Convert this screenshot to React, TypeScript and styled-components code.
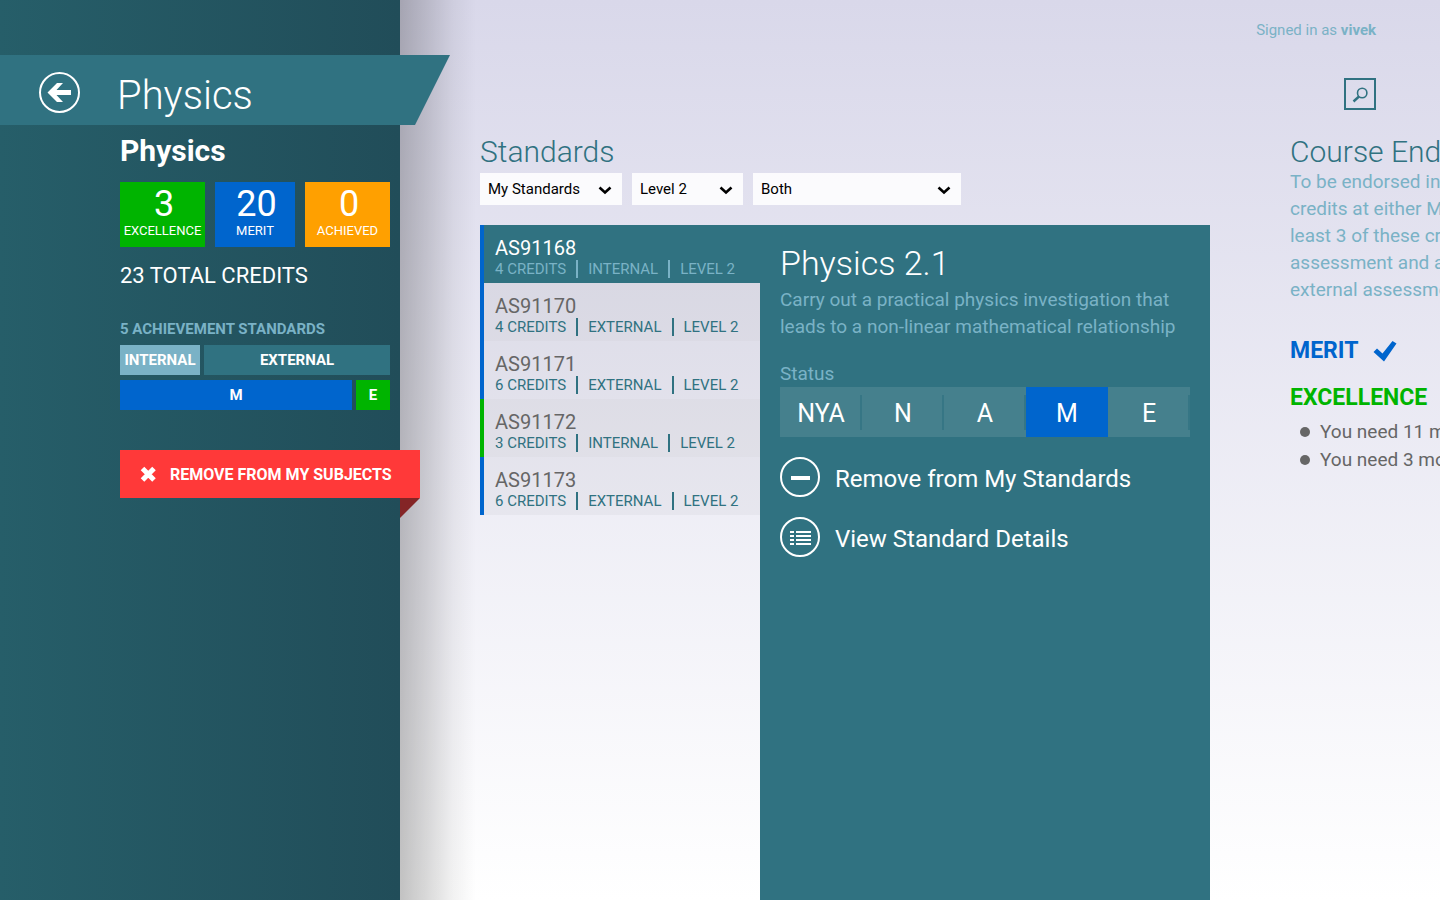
import React, { useState } from "react";
import styled, { createGlobalStyle, css } from "styled-components";

const colors = {
  teal: "#307281",
  pale: "#7ab2c6",
  green: "#00b400",
  blue: "#0065cd",
  orange: "#ffa000",
  red: "#ff3939",
  redDark: "#842526",
  grey: "#666666",
};

const GlobalStyle = createGlobalStyle`
  *, *::before, *::after { box-sizing: border-box; }
  body {
    margin: 0;
    font-family: Roboto, "Open Sans", sans-serif;
    color: ${colors.grey};
  }
  h1, h2, h3, p, ul, dl, dd { margin: 0; padding: 0; font-weight: 400; }
  ul { list-style: none; }
  button, select { font-family: inherit; border: 0; margin: 0; padding: 0; background: none; cursor: pointer; }
`;

const Page = styled.div`
  display: flex;
  min-height: 100vh;
  overflow: hidden;
  background: linear-gradient(#d9d8ea, #ffffff);
`;

const Sidebar = styled.aside`
  position: relative;
  z-index: 1;
  flex: 0 0 400px;
  min-width: 0;
  padding-top: 55px;
  color: #fff;
  background: linear-gradient(to right, #265e69, #214d59);

  &::before {
    content: "";
    position: absolute;
    top: 0;
    bottom: 0;
    left: 100%;
    width: 76px;
    background: linear-gradient(
      to right,
      rgba(0, 0, 0, 0.24),
      rgba(0, 0, 0, 0.15) 35%,
      rgba(0, 0, 0, 0.05) 70%,
      transparent
    );
  }
`;

const Banner = styled.header`
  position: relative;
  display: flex;
  align-items: center;
  height: 70px;
  margin-right: -50px;
  padding-left: 39px;
  gap: 37px;
  background: ${colors.teal};
  clip-path: polygon(0 0, 100% 0, calc(100% - 35px) 100%, 0 100%);
`;

const BackButton = styled.button`
  display: flex;
  width: 41px;
  height: 41px;
  margin-top: 4px;
`;

const BannerTitle = styled.h1`
  padding-top: 12px;
  font-size: 40px;
  line-height: 48px;
  font-weight: 300;
`;

const SidebarBody = styled.div`
  padding: 6px 10px 0 120px;
`;

const SubjectName = styled.h2`
  font-size: 30px;
  line-height: 40px;
  font-weight: 700;
`;

const Tiles = styled.dl`
  display: flex;
  gap: 10px;
  margin-top: 11px;
`;

const Tile = styled.div<{ $color: string; $width: number }>`
  display: flex;
  flex-direction: column-reverse;
  justify-content: flex-end;
  flex: ${(p) => p.$width} 1 0;
  height: 65px;
  padding-top: 2px;
  text-align: center;
  background: ${(p) => p.$color};
`;

const TileLabel = styled.dt`
  font-size: 13px;
  line-height: 14px;
`;

const TileValue = styled.dd`
  padding-left: 3px;
  font-size: 36px;
  line-height: 40px;
`;

const Total = styled.p`
  margin-top: 9px;
  font-size: 22px;
  line-height: 40px;
`;

const BarsTitle = styled.h3`
  margin: 23px 0 6px;
  font-size: 15px;
  line-height: 20px;
  font-weight: 700;
  color: ${colors.pale};
`;

const Bars = styled.div`
  display: flex;
  gap: 4px;
  margin-bottom: 5px;
`;

const Bar = styled.div<{ $color: string; $share: number }>`
  flex: ${(p) => p.$share} 1 0;
  min-width: 0;
  font-size: 15px;
  line-height: 30px;
  font-weight: 700;
  text-align: center;
  background: ${(p) => p.$color};
`;

const RemoveSubject = styled.button`
  position: relative;
  display: flex;
  align-items: center;
  gap: 14px;
  width: 300px;
  height: 48px;
  margin-top: 40px;
  padding-left: 20px;
  color: #fff;
  font-size: 16px;
  font-weight: 700;
  white-space: nowrap;
  background: ${colors.red};

  &::after {
    content: "";
    position: absolute;
    top: 100%;
    right: 0;
    border-top: 20px solid ${colors.redDark};
    border-right: 20px solid transparent;
  }
`;

const Main = styled.main`
  flex: 1 1 0;
  min-width: 0;
  display: flex;
  flex-direction: column;
  overflow: hidden;
`;

const TopBar = styled.div`
  display: flex;
  flex-direction: column;
  align-items: flex-end;
  height: 129px;
  padding: 20px 64px 0 0;
`;

const SignedIn = styled.p`
  font-size: 15px;
  line-height: 20px;
  color: ${colors.pale};
`;

const SearchButton = styled.button`
  display: flex;
  width: 32px;
  height: 32px;
  margin-top: 38px;
  color: ${colors.teal};
`;

const Columns = styled.div`
  flex: 1;
  display: flex;
  gap: 80px;
  padding-left: 80px;
`;

const Standards = styled.section`
  flex: 0 0 730px;
  display: flex;
  flex-direction: column;
`;

const Heading = styled.h2`
  padding-top: 1px;
  font-size: 30px;
  line-height: 43px;
  font-weight: 300;
  color: ${colors.teal};
  white-space: nowrap;
`;

const Filters = styled.form`
  display: flex;
  gap: 10px;
  margin-bottom: 20px;
`;

const Filter = styled.label<{ $width: number }>`
  position: relative;
  width: ${(p) => p.$width}px;

  select {
    display: block;
    width: 100%;
    height: 32px;
    padding: 0 30px 0 8px;
    appearance: none;
    border-radius: 0;
    color: #000;
    font-size: 15px;
    background: rgba(255, 255, 255, 0.85);
  }

  svg {
    position: absolute;
    right: 10px;
    top: 13px;
    pointer-events: none;
  }
`;

const Browser = styled.div`
  flex: 1;
  display: flex;
  align-items: stretch;
`;

const List = styled.ul`
  flex: 0 0 280px;
`;

const Row = styled.button<{ $grade: string; $active: boolean; $shade: boolean }>`
  display: block;
  width: 100%;
  height: 58px;
  padding: 10px 0 4px 11px;
  border-left: 4px solid ${(p) => p.$grade};
  text-align: left;
  color: ${colors.grey};
  background: ${(p) => (p.$shade ? "rgba(0, 0, 0, 0.05)" : "rgba(0, 0, 0, 0.03)")};
  background-clip: padding-box;
  ${(p) =>
    p.$active &&
    css`
      color: #fff;
      background-color: ${colors.teal};
    `}
`;

const Code = styled.span`
  display: block;
  font-size: 20px;
  line-height: 22px;
`;

const Meta = styled.span<{ $active: boolean }>`
  display: flex;
  align-items: center;
  padding-top: 1px;
  font-size: 15px;
  line-height: 18px;
  color: ${(p) => (p.$active ? colors.pale : colors.teal)};

  span + span {
    margin-left: 10px;
    padding-left: 10px;
    border-left: 2px solid currentColor;
  }
`;

const Detail = styled.article`
  flex: 1;
  min-width: 0;
  padding: 18px 20px 20px;
  color: #fff;
  background: ${colors.teal};
`;

const DetailTitle = styled.h2`
  font-size: 34px;
  line-height: 40px;
  font-weight: 300;
`;

const Summary = styled.p`
  margin-top: 3px;
  font-size: 19px;
  line-height: 27px;
  color: ${colors.pale};
`;

const Status = styled.fieldset`
  margin: 21px 0 20px;
  padding: 0;
  border: 0;

  legend {
    padding: 0;
    font-size: 19px;
    line-height: 26px;
    color: ${colors.pale};
  }
`;

const Options = styled.div`
  display: flex;
  height: 50px;
  background: rgba(255, 255, 255, 0.1);
`;

const Option = styled.label<{ $active: boolean }>`
  position: relative;
  flex: 1 1 0;
  font-size: 25px;
  line-height: 54px;
  text-align: center;
  cursor: pointer;
  background: ${(p) => (p.$active ? colors.blue : "transparent")};

  &::after {
    content: "";
    position: absolute;
    right: 0;
    top: 8px;
    width: 2px;
    height: 35px;
    background: ${(p) => (p.$active ? "transparent" : "rgba(48, 114, 129, 0.7)")};
  }

  input {
    position: absolute;
    inset: 0;
    width: 100%;
    height: 100%;
    margin: 0;
    opacity: 0;
    cursor: pointer;
  }
`;

const Action = styled.button`
  display: flex;
  align-items: center;
  gap: 15px;
  height: 40px;
  margin-bottom: 20px;
  color: #fff;
  font-size: 24px;
  line-height: 30px;
  white-space: nowrap;

  span { padding-top: 3px; }
`;

const Course = styled.section`
  flex: 0 0 450px;
`;

const CourseText = styled.p`
  margin: -5px 0 24px;
  font-size: 19px;
  line-height: 27px;
  color: ${colors.pale};

  span {
    display: block;
    white-space: nowrap;
  }
`;

const Grade = styled.h3<{ $color: string }>`
  display: flex;
  align-items: center;
  gap: 15px;
  font-size: 23px;
  line-height: 47px;
  font-weight: 700;
  color: ${(p) => p.$color};
`;

const Needs = styled.ul`
  margin-top: -3px;
  font-size: 19px;
  line-height: 28px;

  li {
    display: flex;
    align-items: center;
    gap: 10px;
    padding-left: 10px;
    white-space: nowrap;
  }

  li::before {
    content: "";
    width: 10px;
    height: 10px;
    border-radius: 50%;
    background: ${colors.grey};
  }
`;

const Chevron = () => (
  <svg width="14" height="9" viewBox="0 0 14 9" aria-hidden="true">
    <path d="M1.5 1.5L7 6.5L12.5 1.5" fill="none" stroke="#000" strokeWidth="2.6" />
  </svg>
);

const standards = [
  { code: "AS91168", credits: 4, kind: "INTERNAL", grade: colors.blue },
  { code: "AS91170", credits: 4, kind: "EXTERNAL", grade: colors.blue },
  { code: "AS91171", credits: 6, kind: "EXTERNAL", grade: colors.blue },
  { code: "AS91172", credits: 3, kind: "INTERNAL", grade: colors.green },
  { code: "AS91173", credits: 6, kind: "EXTERNAL", grade: colors.blue },
];

const filters = [
  { label: "Standards shown", width: 142, options: ["My Standards", "All Standards"] },
  { label: "Level", width: 111, options: ["Level 2", "Level 1", "Level 3"] },
  { label: "Assessment", width: 208, options: ["Both", "Internal", "External"] },
];

export default function App() {
  const [selected, setSelected] = useState("AS91168");
  const [status, setStatus] = useState("M");

  return (
    <Page>
      <GlobalStyle />
      <Sidebar>
        <Banner>
          <BackButton aria-label="Back">
            <svg width="41" height="41" viewBox="0 0 41 41">
              <circle cx="20.5" cy="20.5" r="19.5" fill="none" stroke="#fff" strokeWidth="2" />
              <path d="M8.5 20.5L18 11h6l-6.500 7H32v5H17.500l6.500 7h-6z" fill="#fff" />
            </svg>
          </BackButton>
          <BannerTitle>Physics</BannerTitle>
        </Banner>
        <SidebarBody>
          <SubjectName>Physics</SubjectName>
          <Tiles>
            <Tile $color={colors.green} $width={85}>
              <TileLabel>EXCELLENCE</TileLabel>
              <TileValue>3</TileValue>
            </Tile>
            <Tile $color={colors.blue} $width={80}>
              <TileLabel>MERIT</TileLabel>
              <TileValue>20</TileValue>
            </Tile>
            <Tile $color={colors.orange} $width={85}>
              <TileLabel>ACHIEVED</TileLabel>
              <TileValue>0</TileValue>
            </Tile>
          </Tiles>
          <Total>23 TOTAL CREDITS</Total>
          <BarsTitle>5 ACHIEVEMENT STANDARDS</BarsTitle>
          <Bars>
            <Bar $color={colors.pale} $share={80}>INTERNAL</Bar>
            <Bar $color={colors.teal} $share={186}>EXTERNAL</Bar>
          </Bars>
          <Bars>
            <Bar $color={colors.blue} $share={232}>M</Bar>
            <Bar $color={colors.green} $share={34}>E</Bar>
          </Bars>
          <RemoveSubject>
            <svg width="16" height="16" viewBox="0 0 16 16" aria-hidden="true">
              <path d="M2.5 2.5L14 14M14 2.5L2.5 14" stroke="#fff" strokeWidth="5" />
            </svg>
            REMOVE FROM MY SUBJECTS
          </RemoveSubject>
        </SidebarBody>
      </Sidebar>

      <Main>
        <TopBar>
          <SignedIn>
            Signed in as <strong>vivek</strong>
          </SignedIn>
          <SearchButton aria-label="Search">
            <svg width="32" height="32" viewBox="0 0 32 32" fill="none" stroke="currentColor">
              <rect x="1" y="1" width="30" height="30" strokeWidth="2" />
              <circle cx="18.2" cy="15" r="4.7" strokeWidth="1.6" />
              <path d="M15 18.5L9.5 23.5" strokeWidth="2.4" />
            </svg>
          </SearchButton>
        </TopBar>
        <Columns>
          <Standards>
            <Heading>Standards</Heading>
            <Filters>
              {filters.map((f) => (
                <Filter key={f.label} $width={f.width}>
                  <select aria-label={f.label}>
                    {f.options.map((o) => (
                      <option key={o}>{o}</option>
                    ))}
                  </select>
                  <Chevron />
                </Filter>
              ))}
            </Filters>
            <Browser>
              <List>
                {standards.map((s, i) => (
                  <li key={s.code}>
                    <Row
                      $grade={s.grade}
                      $active={s.code === selected}
                      $shade={i % 2 === 1}
                      onClick={() => setSelected(s.code)}
                    >
                      <Code>{s.code}</Code>
                      <Meta $active={s.code === selected}>
                        <span>{s.credits} CREDITS</span>
                        <span>{s.kind}</span>
                        <span>LEVEL 2</span>
                      </Meta>
                    </Row>
                  </li>
                ))}
              </List>
              <Detail>
                <DetailTitle>Physics 2.1</DetailTitle>
                <Summary>
                  Carry out a practical physics investigation that leads to a non-linear mathematical
                  relationship
                </Summary>
                <Status>
                  <legend>Status</legend>
                  <Options>
                    {["NYA", "N", "A", "M", "E"].map((g) => (
                      <Option key={g} $active={g === status}>
                        <input
                          type="radio"
                          name="status"
                          value={g}
                          checked={g === status}
                          onChange={() => setStatus(g)}
                        />
                        {g}
                      </Option>
                    ))}
                  </Options>
                </Status>
                <Action>
                  <svg width="40" height="40" viewBox="0 0 40 40" aria-hidden="true">
                    <circle cx="20" cy="20" r="19" fill="none" stroke="#fff" strokeWidth="2" />
                    <rect x="11" y="19" width="19" height="4" fill="#fff" />
                  </svg>
                  <span>Remove from My Standards</span>
                </Action>
                <Action>
                  <svg width="40" height="40" viewBox="0 0 40 40" aria-hidden="true">
                    <circle cx="20" cy="20" r="19" fill="none" stroke="#fff" strokeWidth="2" />
                    <path
                      d="M10 15h4M16 15h15M10 19h4M16 19h15M10 23h4M16 23h15M10 27h4M16 27h15"
                      stroke="#fff"
                      strokeWidth="2"
                    />
                  </svg>
                  <span>View Standard Details</span>
                </Action>
              </Detail>
            </Browser>
          </Standards>

          <Course>
            <Heading>Course Endorsement</Heading>
            <CourseText>
              <span>To be endorsed in Physics you need 14</span>
              <span>credits at either Merit or Excellence. At</span>
              <span>least 3 of these credits must be internal</span>
              <span>assessment and at least 3 must be</span>
              <span>external assessment.</span>
            </CourseText>
            <Grade $color={colors.blue}>
              MERIT
              <svg width="24" height="22" viewBox="0 0 24 22" aria-hidden="true">
                <path d="M0.5 12L4 8.500L9.500 13.500L19.500 1L23.500 3.500L11 21.500z" fill={colors.blue} />
              </svg>
            </Grade>
            <Grade $color={colors.green}>EXCELLENCE</Grade>
            <Needs>
              <li>You need 11 more credits</li>
              <li>You need 3 more external credits</li>
            </Needs>
          </Course>
        </Columns>
      </Main>
    </Page>
  );
}
